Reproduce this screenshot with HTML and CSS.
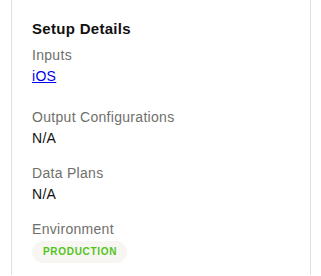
FILE: index.html
```html
<!DOCTYPE html>
<html lang="en">
<head>
  <meta charset="UTF-8" />
  <meta name="viewport" content="width=device-width, initial-scale=1.0"/>
  <title>Setup Details</title>
  <link rel="stylesheet" href="styles.css">
</head>
<body>
  <div class="details-card">
    <div class="details-title">Setup Details</div>

    <div class="detail-group first">
      <div class="detail-label">Inputs</div>
      <div class="detail-value"><a href="#">iOS</a></div>
    </div>

    <div class="detail-group">
      <div class="detail-label">Output Configurations</div>
      <div class="detail-value">N/A</div>
    </div>

    <div class="detail-group">
      <div class="detail-label">Data Plans</div>
      <div class="detail-value">N/A</div>
    </div>

    <div class="detail-group">
      <div class="detail-label">Environment</div>
      <div class="detail-value"><span class="env-badge">PRODUCTION</span></div>
    </div>
  </div>
</body>
</html>
```

FILE: styles.css
```css
html, body {
  font-family: 'Liberation Sans', Arial, sans-serif;
  background: #fff;
  margin: 0;
  padding: 0;
}
.details-card {
  margin-left: 11px;
  width: 300px;
  min-height: 275px;
  border-left: 1px solid #e0e0e0;
  border-right: 1px solid #e0e0e0;
  padding: 19px 20px 0 20px;
  box-sizing: border-box;
}
.details-title {
  font-size: 15px;
  font-weight: bold;
  letter-spacing: 0.3px;
  line-height: 20px;
  color: #111;
}
/* -- GROUPS -- */
.detail-group {
  margin-top: 14px;
}
.detail-group.first {
  margin-top: 6px;
  margin-bottom: 20px;
}
.detail-label {
  font-size: 14px;
  letter-spacing: 0.3px;
  line-height: 21px;
  color: #6f6f6b;
}
.detail-value {
  font-size: 14px;
  letter-spacing: 0.3px;
  line-height: 21px;
  color: #111;
}
.detail-value a {
  color: #0000ee;
  text-decoration: underline;
}
.env-badge {
  display: inline-block;
  margin-top: 1px;
  background: #f7f6f3;
  color: #52c41a;
  border-radius: 11px;
  font-size: 10px;
  font-weight: bold;
  letter-spacing: 0.7px;
  line-height: 22px;
  padding: 0 10px 0 11px;
}
```
